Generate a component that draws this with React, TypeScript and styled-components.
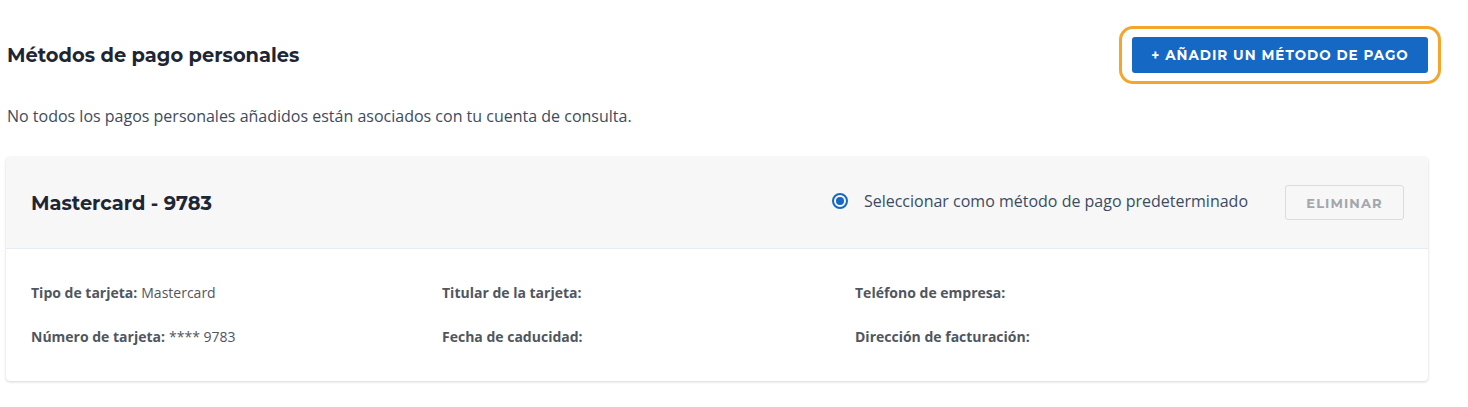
import React from 'react'
import styled, { createGlobalStyle } from 'styled-components'

const GlobalStyle = createGlobalStyle`
    body {
        margin: 0;
        background: #ffffff;
        font-family: "Open Sans", "Liberation Sans", sans-serif;
    }
`

export default function App() {
    return (
        <Page>
            <GlobalStyle />

            <Header>
                <Heading>Métodos de pago personales</Heading>
                <FocusRing>
                    <AddButton>+ Añadir un método de pago</AddButton>
                </FocusRing>
            </Header>

            <Note>
                No todos los pagos personales añadidos están asociados con tu cuenta de consulta.
            </Note>

            <Card>
                <CardHeader>
                    <CardTitle>Mastercard - 9783</CardTitle>
                    <Actions>
                        <RadioLabel>
                            <Radio />
                            Seleccionar como método de pago predeterminado
                        </RadioLabel>
                        <GhostButton>Eliminar</GhostButton>
                    </Actions>
                </CardHeader>

                <Details>
                    <Field label="Tipo de tarjeta:" value="Mastercard" />
                    <Field label="Titular de la tarjeta:" />
                    <Field label="Teléfono de empresa:" />
                    <Field label="Número de tarjeta:" value="**** 9783" />
                    <Field label="Fecha de caducidad:" />
                    <Field label="Dirección de facturación:" />
                </Details>
            </Card>
        </Page>
    )
}

const Field = (props: { label: string, value?: string }) => (
    <Item>
        <Label>{props.label}</Label>
        {props.value && <Value>{props.value}</Value>}
    </Item>
)

const Page = styled.div`
    width: 1422px;
    padding: 26px 0 20px 6px;
`

const Header = styled.div`
    display: flex;
    align-items: center;
    justify-content: space-between;
`

const Heading = styled.h2`
    margin: 0 0 0 1px;
    font-family: "Montserrat", "Inter", sans-serif;
    font-size: 19.4px;
    font-weight: 700;
    color: #1e2636;
`

const FocusRing = styled.div`
    margin-right: -13px;
    padding: 8px 10px;
    border: 3px solid #f6a52b;
    border-radius: 14px;
    display: flex;
`

const AddButton = styled.button`
    width: 296px;
    height: 36px;
    border: none;
    border-radius: 3px;
    background: #1668c5;
    color: #ffffff;
    font-family: "Montserrat", "Inter", sans-serif;
    font-size: 13.5px;
    font-weight: 700;
    letter-spacing: 1px;
    text-transform: uppercase;
    cursor: pointer;
`

const Note = styled.p`
    margin: 21px 0 0 1px;
    font-size: 16px;
    line-height: 22px;
    color: #3d4b60;
`

const Card = styled.div`
    margin-top: 30px;
    border-radius: 4px;
    background: #ffffff;
    box-shadow: 0 1px 3px rgba(0, 0, 0, 0.16), 0 0 1px rgba(0, 0, 0, 0.08);
    overflow: hidden;
`

const CardHeader = styled.div`
    height: 91px;
    padding: 0 24px 0 25px;
    display: flex;
    align-items: center;
    justify-content: space-between;
    background: #f7f7f7;
    border-bottom: 1px solid #e4ebf2;
`

const CardTitle = styled.h3`
    margin: 0;
    font-family: "Montserrat", "Inter", sans-serif;
    font-size: 19.4px;
    font-weight: 700;
    color: #1e2636;
`

const Actions = styled.div`
    display: flex;
    align-items: center;
    gap: 37px;
    margin-top: -4px;
`

const RadioLabel = styled.label`
    display: flex;
    align-items: center;
    gap: 16px;
    font-size: 16px;
    color: #3d4b60;
`

const Radio = styled.span`
    width: 16px;
    height: 16px;
    box-sizing: border-box;
    border: 2px solid #1668c5;
    border-radius: 50%;
    display: flex;
    align-items: center;
    justify-content: center;

    &::after {
        content: "";
        width: 8px;
        height: 8px;
        border-radius: 50%;
        background: #1668c5;
    }
`

const GhostButton = styled.button`
    width: 119px;
    height: 35px;
    margin-top: 4px;
    border: 1px solid #dcdcdc;
    border-radius: 3px;
    background: #f7f7f7;
    color: #a3a6ab;
    font-family: "Montserrat", "Inter", sans-serif;
    font-size: 13px;
    font-weight: 700;
    letter-spacing: 1.1px;
    text-transform: uppercase;
`

const Details = styled.div`
    padding: 34px 25px 34px;
    display: grid;
    grid-template-columns: 411px 413px 1fr;
    row-gap: 24px;
`

const Item = styled.div`
    font-size: 14px;
    line-height: 20px;
    color: #505660;
`

const Label = styled.span`
    font-weight: 700;
    margin-right: 4px;
`

const Value = styled.span`
    font-weight: 400;
`
